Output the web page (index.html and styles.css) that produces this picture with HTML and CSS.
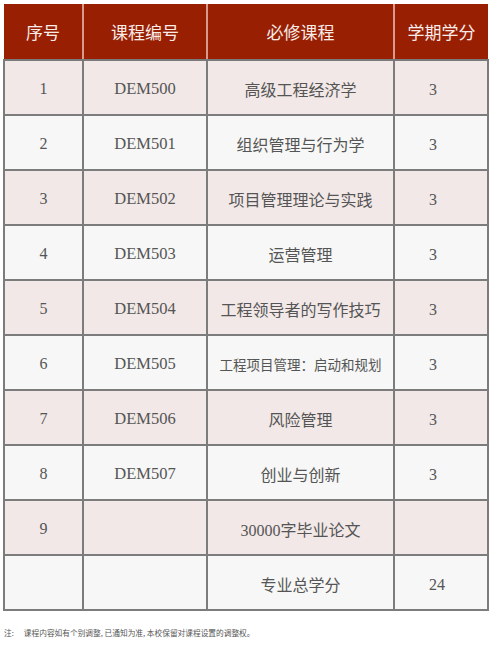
FILE: index.html
```html
<!DOCTYPE html>
<html lang="zh">
<head>
<meta charset="utf-8">
<link rel="stylesheet" href="styles.css">
</head>
<body>
<div class="page">
  <table class="courses">
    <colgroup>
      <col class="c1"><col class="c2"><col class="c3"><col class="c4">
    </colgroup>
    <thead>
      <tr><th>序号</th><th>课程编号</th><th>必修课程</th><th>学期学分</th></tr>
    </thead>
    <tbody>
      <tr class="pink"><td>1</td><td class="code">DEM500</td><td>高级工程经济学</td><td class="credit">3</td></tr>
      <tr><td>2</td><td class="code">DEM501</td><td>组织管理与行为学</td><td class="credit">3</td></tr>
      <tr class="pink"><td>3</td><td class="code">DEM502</td><td>项目管理理论与实践</td><td class="credit">3</td></tr>
      <tr><td>4</td><td class="code">DEM503</td><td>运营管理</td><td class="credit">3</td></tr>
      <tr class="pink"><td>5</td><td class="code">DEM504</td><td>工程领导者的写作技巧</td><td class="credit">3</td></tr>
      <tr><td>6</td><td class="code">DEM505</td><td class="small">工程项目管理：启动和规划</td><td class="credit">3</td></tr>
      <tr class="pink"><td>7</td><td class="code">DEM506</td><td>风险管理</td><td class="credit">3</td></tr>
      <tr><td>8</td><td class="code">DEM507</td><td>创业与创新</td><td class="credit">3</td></tr>
      <tr class="pink"><td>9</td><td></td><td>30000字毕业论文</td><td class="credit"></td></tr>
      <tr><td></td><td></td><td>专业总学分</td><td class="credit total">24</td></tr>
    </tbody>
  </table>
  <p class="note"><span class="label">注:</span>课程内容如有个别调整, 已通知为准, 本校保留对课程设置的调整权。</p>
</div>
</body>
</html>
```

FILE: styles.css
```css
html, body {
  margin: 0;
  padding: 0;
  background: #ffffff;
}
.page {
  padding: 4px 0 0 3px;
  width: 501px;
  height: 645px;
  box-sizing: border-box;
}
.courses {
  border-collapse: collapse;
  table-layout: fixed;
  width: 484px;
}
.c1 { width: 79px; }
.c2 { width: 124px; }
.c3 { width: 187px; }
.c4 { width: 94px; }
.courses th {
  height: 55px;
  padding: 0;
  background: #991f03;
  color: #f6ece8;
  font-family: "Noto Sans CJK SC", sans-serif;
  font-weight: 400;
  font-size: 17px;
  text-align: center;
  border-right: 2px solid #d79a8c;
  border-bottom: 2px solid #7a7a7a;
}
.courses th:last-child {
  border-right: none;
}
.courses td {
  height: 51px;
  padding: 2px 0 0 0;
  border: 2px solid #7c7c7c;
  background: #f6f7f6;
  color: #555555;
  font-family: "Liberation Serif", "Noto Sans CJK SC", serif;
  font-size: 16px;
  text-align: center;
  vertical-align: middle;
}
.courses tr.pink td {
  background: #f1e8e7;
}
.courses td.code {
  font-size: 16.5px;
}
.courses td.small {
  font-size: 13.5px;
}
.courses td.credit {
  height: 49px;
  padding-right: 16px;
  padding-top: 4px;
}
.courses td.total {
  padding-right: 8px;
}
.note {
  margin: 16px 0 0 1px;
  font-family: "Noto Sans CJK SC", sans-serif;
  font-size: 7.7px;
  color: #555555;
}
.note .label {
  margin-right: 10px;
}
```
